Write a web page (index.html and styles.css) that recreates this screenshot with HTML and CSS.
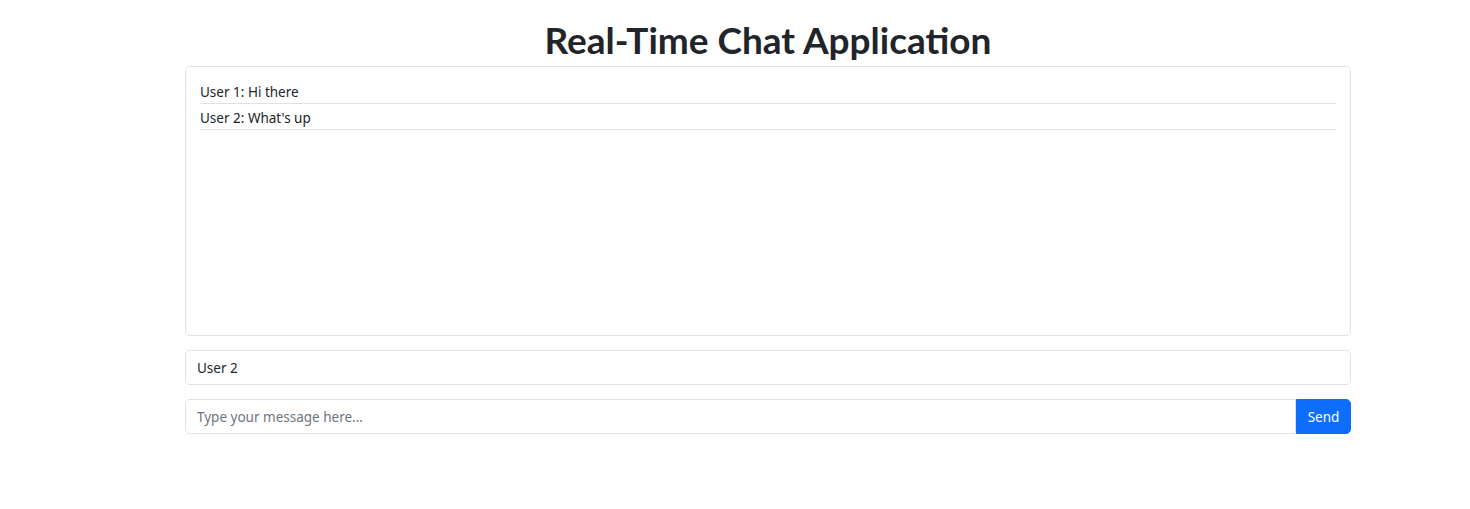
FILE: index.html
```html
<!DOCTYPE html>
<html lang="en">
<head>
<meta charset="utf-8">
<title>Real-Time Chat Application</title>
<link rel="stylesheet" href="styles.css">
</head>
<body>
<div class="container">
  <h1 class="title">Real-Time Chat Application</h1>
  <div class="chat-box">
    <div class="msg">User 1: Hi there</div>
    <div class="msg">User 2: What's up</div>
  </div>
  <input class="field user-field" type="text" value="User 2">
  <div class="input-group">
    <input class="field msg-field" type="text" placeholder="Type your message here...">
    <button class="send" type="button">Send</button>
  </div>
</div>
</body>
</html>
```
FILE: styles.css
```css
html, body {
  margin: 0;
  padding: 0;
  background: #fff;
}
body {
  font-family: "Noto Sans", "Open Sans", sans-serif;
  font-size: 13.5px;
  line-height: 1.5;
  color: #212529;
}
.container {
  width: 1166px;
  margin: 0 0 0 185px;
  padding-top: 16px;
}
.title {
  margin: 0 0 2px;
  font-family: "Lato", "Noto Sans", sans-serif;
  font-size: 37px;
  font-weight: 700;
  line-height: 48px;
  text-align: center;
  color: #212529;
}
.chat-box {
  box-sizing: border-box;
  height: 270px;
  border: 1px solid #dee2e6;
  border-radius: 5px;
  padding: 11px 14px;
  margin-bottom: 14px;
}
.msg {
  padding-top: 4px;
  line-height: 21px;
  border-bottom: 1px solid #dee2e6;
}
.field {
  box-sizing: border-box;
  font-family: inherit;
  font-size: 13.5px;
  line-height: 21px;
  color: #212529;
  padding: 6px 11px;
  border: 1px solid #dee2e6;
  border-radius: 5px;
  background: #fff;
  outline: none;
}
.field::placeholder {
  color: #6c757d;
}
.user-field {
  display: block;
  width: 100%;
  height: 35px;
  margin-bottom: 14px;
}
.input-group {
  display: flex;
  height: 35px;
}
.msg-field {
  flex: 1;
  min-width: 0;
  height: 35px;
  border-radius: 5px 0 0 5px;
}
.send {
  width: 55px;
  height: 35px;
  font-family: inherit;
  font-size: 13.5px;
  color: #fff;
  background: #0d6efd;
  border: 1px solid #0d6efd;
  border-radius: 0 5px 5px 0;
  padding: 0;
  cursor: pointer;
}
```
